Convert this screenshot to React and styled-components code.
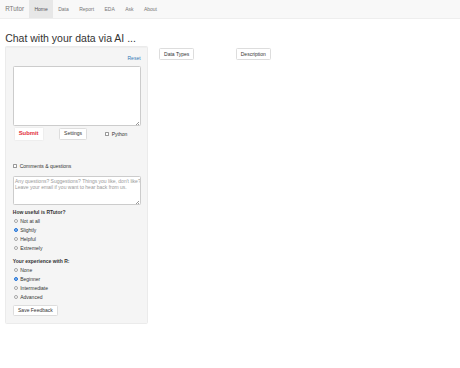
import styled, { createGlobalStyle } from "styled-components";

const GlobalStyle = createGlobalStyle`
  body {
    margin: 0;
    background: #fff;
    color: #333;
    font-family: "Liberation Sans", Arial, sans-serif;
  }
`;

const navItems = ["Home", "Data", "Report", "EDA", "Ask", "About"];

export default function App() {
  return (
    <>
      <GlobalStyle />
      <Navbar>
        <Brand>RTutor</Brand>
        {navItems.map(n => (
          <NavItem key={n} $active={n === "Home"}>{n}</NavItem>
        ))}
      </Navbar>
      <Title>Chat with your data via AI ...</Title>
      <Layout>
        <Well>
          <ResetRow><a>Reset</a></ResetRow>
          <AreaWrap $mt={4.25} $h={60}>
            <TextArea />
            <Grip />
          </AreaWrap>
          <ButtonRow>
            <Cell><SubmitButton>Submit</SubmitButton></Cell>
            <Cell><Button>Settings</Button></Cell>
            <CheckLine><Box />Python</CheckLine>
          </ButtonRow>
          <CheckLine $mt={21.9}><Box />Comments &amp; questions</CheckLine>
          <AreaWrap $mt={6} $h={29.5}>
            <TextArea
              placeholder={"Any questions? Suggestions? Things you like, don't like?\nLeave your email if you want to hear back from us."}
            />
            <Grip />
          </AreaWrap>
          <Question $mt={3.2}>How useful is RTutor?</Question>
          <RadioGroup $mt={0.8}>
            {["Not at all", "Slightly", "Helpful", "Extremely"].map(r => (
              <RadioLine key={r}><Radio $checked={r === "Slightly"} />{r}</RadioLine>
            ))}
          </RadioGroup>
          <Question $mt={5.25}>Your experience with R:</Question>
          <RadioGroup $mt={0.25}>
            {["None", "Beginner", "Intermediate", "Advanced"].map(r => (
              <RadioLine key={r}><Radio $checked={r === "Beginner"} />{r}</RadioLine>
            ))}
          </RadioGroup>
          <SaveButton>Save Feedback</SaveButton>
        </Well>
        <Main>
          <Cell $w={76.7}><Button>Data Types</Button></Cell>
          <Cell $w={76.7}><Button>Description</Button></Cell>
        </Main>
      </Layout>
    </>
  );
}

const Navbar = styled.div`
  height: 18px;
  background: #f8f8f8;
  border-bottom: 1px solid #eeeeee;
  display: flex;
  align-items: stretch;
`;

const Brand = styled.div`
  padding: 0 5.2px;
  font-size: 6.3px;
  line-height: 18px;
  color: #777;
`;

const NavItem = styled.div`
  padding: 0 5.2px;
  font-size: 5px;
  line-height: 18px;
  color: ${p => (p.$active ? "#555" : "#777")};
  background: ${p => (p.$active ? "#e7e7e7" : "transparent")};
`;

const Title = styled.h2`
  margin: 13.2px 5.2px 0;
  font-size: 10.5px;
  line-height: 12px;
  font-weight: normal;
  color: #333;
`;

const Layout = styled.div`
  display: grid;
  grid-template-columns: 143px 1fr;
  column-gap: 10.4px;
  padding: 0 5.2px;
  margin-top: 2.3px;
  align-items: start;
`;

const Well = styled.div`
  background: #f5f5f5;
  border: 1px solid #ebebeb;
  border-radius: 1.4px;
  padding: 6.65px;
  box-shadow: inset 0 0.4px 0.4px rgba(0, 0, 0, 0.05);
  font-size: 5px;
  line-height: 7.1px;
`;

const ResetRow = styled.div`
  margin-top: 0.5px;
  text-align: right;
  a {
    color: #337ab7;
  }
`;

const AreaWrap = styled.div`
  position: relative;
  margin-top: ${p => p.$mt}px;
  height: ${p => p.$h}px;
`;

const TextArea = styled.textarea`
  display: block;
  box-sizing: border-box;
  width: 100%;
  height: 100%;
  margin: 0;
  padding: 0.8px 0.5px 0 1.2px;
  border: 1px solid #cccccc;
  border-radius: 1.4px;
  background: #fff;
  font-family: "Liberation Sans", Arial, sans-serif;
  font-size: 5px;
  line-height: 6.7px;
  white-space: pre;
  overflow: hidden;
  resize: none;
  outline: none;
  &::placeholder {
    color: #999;
  }
`;

const Grip = styled.span`
  position: absolute;
  right: 1.2px;
  bottom: 1.2px;
  width: 3px;
  height: 3px;
  background: linear-gradient(
    135deg,
    transparent 45%,
    #999 45%,
    #999 55%,
    transparent 55%,
    transparent 75%,
    #999 75%,
    #999 85%,
    transparent 85%
  );
`;

const ButtonRow = styled.div`
  margin-top: 1px;
  height: 14px;
  display: grid;
  grid-template-columns: repeat(3, 1fr);
  column-gap: 10.4px;
  align-items: center;
`;

const Cell = styled.div`
  display: flex;
  align-items: center;
  width: ${p => (p.$w ? `${p.$w}px` : "auto")};
`;

const Button = styled.button`
  box-sizing: border-box;
  height: 11.7px;
  padding: 0 4.2px;
  border: 1px solid #dddddd;
  border-radius: 1.4px;
  background: #fff;
  color: #333;
  font-family: "Liberation Sans", Arial, sans-serif;
  font-size: 5px;
  line-height: 1;
  cursor: pointer;
`;

const SubmitButton = styled(Button)`
  height: 14px;
  padding: 0 4px;
  margin-left: 0.8px;
  font-size: 5.9px;
  font-weight: bold;
  color: #e3303b;
  border-color: #eeeeee;
`;

const SaveButton = styled(Button)`
  display: block;
  margin-top: 3.4px;
  height: 11px;
`;

const CheckLine = styled.div`
  display: flex;
  align-items: center;
  margin-top: ${p => (p.$mt ? `${p.$mt}px` : "1px")};
  margin-left: -1px;
  line-height: 7.1px;
`;

const Box = styled.span`
  box-sizing: border-box;
  width: 4px;
  height: 4px;
  margin: 0 3px 0 0.8px;
  border: 0.6px solid #999;
  border-radius: 0.6px;
  background: #fff;
`;

const Question = styled.div`
  margin-top: ${p => p.$mt}px;
  font-weight: bold;
  line-height: 7.1px;
`;

const RadioGroup = styled.div`
  margin-top: ${p => p.$mt}px;
`;

const RadioLine = styled.div`
  display: flex;
  align-items: center;
  height: 9.1px;
`;

const Radio = styled.span`
  box-sizing: border-box;
  width: 4px;
  height: 4px;
  margin: 0 2.6px 0 0.8px;
  border-radius: 50%;
  border: 0.6px solid ${p => (p.$checked ? "#1a6fd8" : "#a5a5a5")};
  background: ${p =>
    p.$checked ? "radial-gradient(circle, #1a6fd8 0 45%, #fff 55%)" : "#fff"};
`;

const Main = styled.div`
  display: flex;
  margin-top: 1.8px;
  margin-left: 0.3px;
`;
